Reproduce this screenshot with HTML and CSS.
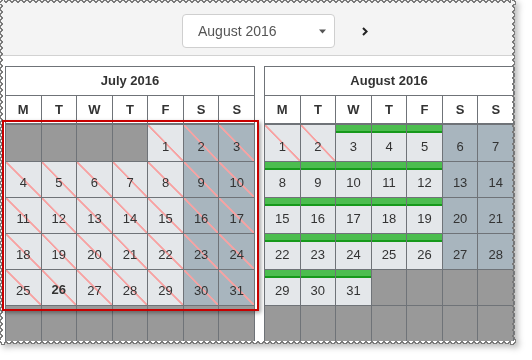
FILE: index.html
```html
<!DOCTYPE html>
<html lang="en">
<head>
<meta charset="utf-8">
<title>Calendar</title>
<link rel="stylesheet" href="styles.css">
</head>
<body>
<div class="stage">
  <div class="frame">
    <div class="paper">
      <div class="toolbar">
        <div class="select">
          <span class="select-label">August 2016</span>
          <svg class="caret" width="7" height="5" viewBox="0 0 7 5"><path d="M0 0.5H7L3.5 4.5Z" fill="#555"/></svg>
        </div>
        <span class="next"><svg width="6" height="9" viewBox="0 0 6 9"><path d="M1 1L4.6 4.5L1 8" fill="none" stroke="#222" stroke-width="2"/></svg></span>
      </div>
      <div class="calendars">
        <div class="cal">
          <div class="cal-title">July 2016</div>
          <div class="cal-head"><span>M</span><span>T</span><span>W</span><span>T</span><span>F</span><span>S</span><span>S</span></div>
          <div class="cal-body">
            <span class="cell x"></span><span class="cell x"></span><span class="cell x"></span><span class="cell x"></span><span class="cell past">1</span><span class="cell we past">2</span><span class="cell we past">3</span>
            <span class="cell past">4</span><span class="cell past">5</span><span class="cell past">6</span><span class="cell past">7</span><span class="cell past">8</span><span class="cell we past">9</span><span class="cell we past">10</span>
            <span class="cell past">11</span><span class="cell past">12</span><span class="cell past">13</span><span class="cell past">14</span><span class="cell past">15</span><span class="cell we past">16</span><span class="cell we past">17</span>
            <span class="cell past">18</span><span class="cell past">19</span><span class="cell past">20</span><span class="cell past">21</span><span class="cell past">22</span><span class="cell we past">23</span><span class="cell we past">24</span>
            <span class="cell past">25</span><span class="cell past today"><b>26</b></span><span class="cell past">27</span><span class="cell past">28</span><span class="cell past">29</span><span class="cell we past">30</span><span class="cell we past">31</span>
            <span class="cell x"></span><span class="cell x"></span><span class="cell x"></span><span class="cell x"></span><span class="cell x"></span><span class="cell x"></span><span class="cell x"></span>
          </div>
        </div>
        <div class="cal">
          <div class="cal-title">August 2016</div>
          <div class="cal-head"><span>M</span><span>T</span><span>W</span><span>T</span><span>F</span><span>S</span><span>S</span></div>
          <div class="cal-body">
            <span class="cell past">1</span><span class="cell past">2</span><span class="cell bar">3</span><span class="cell bar">4</span><span class="cell bar">5</span><span class="cell we">6</span><span class="cell we">7</span>
            <span class="cell bar">8</span><span class="cell bar">9</span><span class="cell bar">10</span><span class="cell bar">11</span><span class="cell bar">12</span><span class="cell we">13</span><span class="cell we">14</span>
            <span class="cell bar">15</span><span class="cell bar">16</span><span class="cell bar">17</span><span class="cell bar">18</span><span class="cell bar">19</span><span class="cell we">20</span><span class="cell we">21</span>
            <span class="cell bar">22</span><span class="cell bar">23</span><span class="cell bar">24</span><span class="cell bar">25</span><span class="cell bar">26</span><span class="cell we">27</span><span class="cell we">28</span>
            <span class="cell bar">29</span><span class="cell bar">30</span><span class="cell bar">31</span><span class="cell x"></span><span class="cell x"></span><span class="cell x"></span><span class="cell x"></span>
            <span class="cell x"></span><span class="cell x"></span><span class="cell x"></span><span class="cell x"></span><span class="cell x"></span><span class="cell x"></span><span class="cell x"></span>
          </div>
        </div>
      </div>
    </div>
  </div>
  <div class="highlight"></div>
</div>
</body>
</html>
```

FILE: styles.css
```css
html, body {
  margin: 0;
  padding: 0;
  background: #fff;
}

body {
  font-family: "Liberation Sans", Arial, sans-serif;
  color: #333;
}

.stage {
  position: relative;
  width: 532px;
  height: 360px;
  overflow: hidden;
}

.frame {
  width: 515px;
  height: 344px;
  filter: drop-shadow(1px 0 0 #7a7a7a) drop-shadow(-1px 0 0 #7a7a7a) drop-shadow(0 1px 0 #7a7a7a) drop-shadow(0 -1px 0 #7a7a7a) drop-shadow(3px 3px 3px rgba(0, 0, 0, 0.28));
}

.paper {
  width: 515px;
  height: 344px;
  overflow: hidden;
  background: #fff;
  -webkit-mask-image:
    conic-gradient(from 143.13deg at 50% 0, #000 73.74deg, #0000 0),
    conic-gradient(from -36.87deg at 50% 100%, #000 73.74deg, #0000 0),
    conic-gradient(from 53.13deg at 0 50%, #000 73.74deg, #0000 0),
    conic-gradient(from 233.13deg at 100% 50%, #000 73.74deg, #0000 0),
    linear-gradient(#000, #000);
  -webkit-mask-size: 6px 4px, 6px 4px, 4px 6px, 4px 6px, calc(100% - 8px) calc(100% - 8px);
  -webkit-mask-position: 0 0, 0 100%, 0 0, 100% 0, 50% 50%;
  -webkit-mask-repeat: repeat-x, repeat-x, repeat-y, repeat-y, no-repeat;
  mask-image:
    conic-gradient(from 143.13deg at 50% 0, #000 73.74deg, #0000 0),
    conic-gradient(from -36.87deg at 50% 100%, #000 73.74deg, #0000 0),
    conic-gradient(from 53.13deg at 0 50%, #000 73.74deg, #0000 0),
    conic-gradient(from 233.13deg at 100% 50%, #000 73.74deg, #0000 0),
    linear-gradient(#000, #000);
  mask-size: 6px 4px, 6px 4px, 4px 6px, 4px 6px, calc(100% - 8px) calc(100% - 8px);
  mask-position: 0 0, 0 100%, 0 0, 100% 0, 50% 50%;
  mask-repeat: repeat-x, repeat-x, repeat-y, repeat-y, no-repeat;
}

/* toolbar */
.toolbar {
  box-sizing: border-box;
  height: 56px;
  padding: 14px 0 0 182px;
  background: #f4f4f4;
  border-bottom: 1px solid #d2d2d2;
  display: flex;
  align-items: flex-start;
}

.select {
  box-sizing: border-box;
  width: 153px;
  height: 34px;
  background: #fff;
  border: 1px solid #cfcfcf;
  border-radius: 4px;
  display: flex;
  align-items: center;
  padding: 0 8px 0 15px;
  font-size: 14px;
  color: #555;
}

.select-label {
  flex: 1;
}

.caret {
  display: block;
  margin-top: 1px;
}

.next {
  display: flex;
  align-items: center;
  height: 34px;
  margin-left: 27px;
}

.next svg {
  display: block;
}

/* calendars */
.calendars {
  display: flex;
  gap: 9px;
  padding: 10px 0 0 5px;
}

.cal {
  flex: none;
  box-sizing: border-box;
  width: 250px;
  border: 1px solid #6f7378;
  border-bottom: none;
  background: #fff;
}

.cal-title {
  height: 28px;
  line-height: 28px;
  text-align: center;
  font-size: 13px;
  font-weight: bold;
  color: #333;
  border-bottom: 1px solid #6f7378;
}

.cal-head {
  display: grid;
  grid-template-columns: repeat(7, 1fr);
  gap: 1px;
  background: #6f7378;
  border-bottom: 2px solid #6f7378;
}

.cal-head span {
  height: 27px;
  background: #fff;
  display: flex;
  align-items: center;
  justify-content: center;
  font-size: 13px;
  font-weight: bold;
  color: #333;
}

.cal-body {
  display: grid;
  grid-template-columns: repeat(7, 1fr);
  grid-template-rows: 36px repeat(5, 35px);
  gap: 1px;
  background: #6f7378;
}

.cell {
  position: relative;
  box-sizing: border-box;
  display: flex;
  align-items: center;
  justify-content: center;
  padding-top: 6px;
  font-size: 13px;
  color: #333;
  background-color: #e4e7ea;
}

.cell.we {
  background-color: #a8b5be;
}

.cell.x {
  background-color: #999;
}

.cell.past {
  background-image: linear-gradient(to top right, transparent calc(50% - 1.2px), #f7a2a2 calc(50% - 0.6px), #f7a2a2 calc(50% + 0.6px), transparent calc(50% + 1.2px));
}

.cell.bar::before {
  content: "";
  position: absolute;
  left: 0;
  right: 0;
  top: 0;
  height: 8px;
  background: linear-gradient(#4cbd4f 0 6px, #16991b 6px 8px);
}

.cell.today b {
  margin-top: -3px;
}

/* highlight overlay */
.highlight {
  position: absolute;
  left: 2px;
  top: 120px;
  width: 257px;
  height: 191px;
  box-sizing: border-box;
  border: 2px solid #c80000;
  box-shadow: 2px 2px 4px rgba(0, 0, 0, 0.35);
}
```
